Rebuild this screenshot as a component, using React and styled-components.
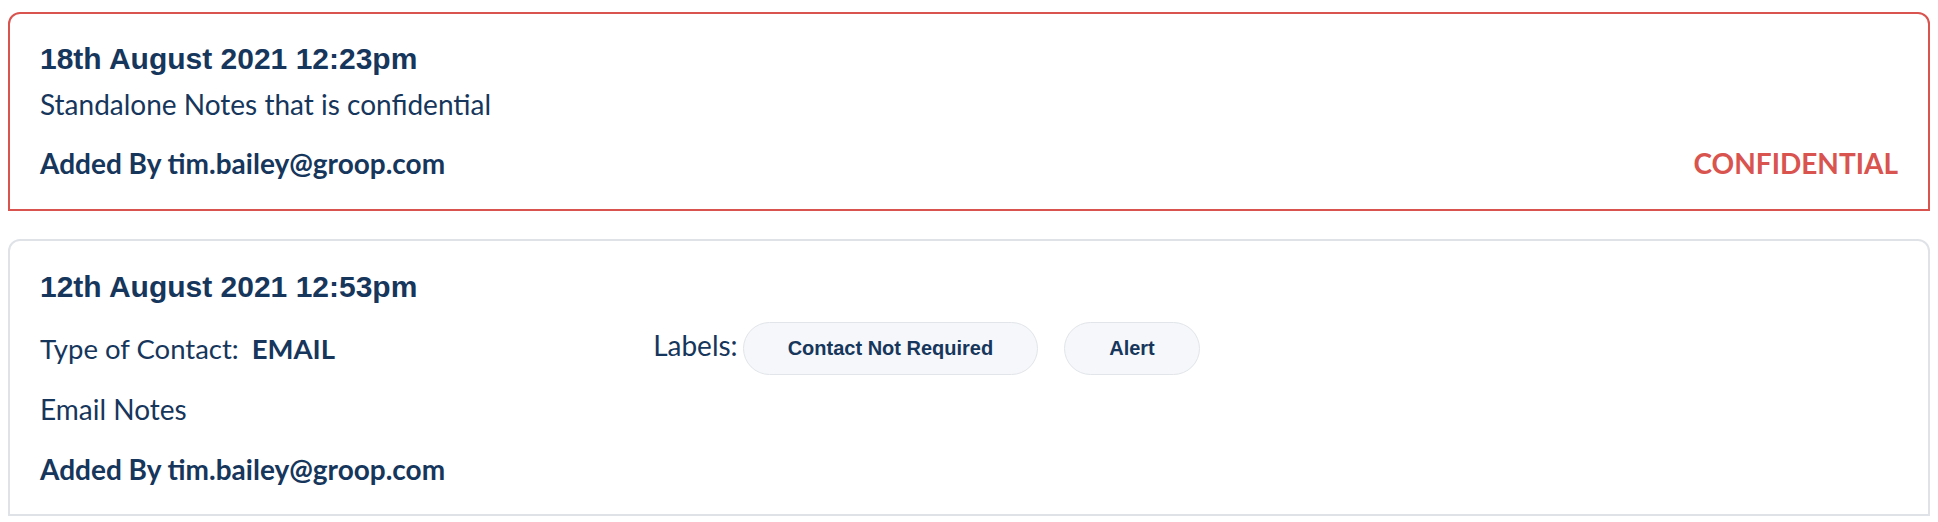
import React from "react";
import styled, { createGlobalStyle } from "styled-components";

const Global = createGlobalStyle`
  body {
    margin: 8px;
    background: #ffffff;
    font-family: "Lato", "Noto Sans", sans-serif;
    color: #16365c;
  }
`;

const List = styled.div`
  display: flex;
  flex-direction: column;
  gap: 28px;
  padding-top: 4px;
`;

const Card = styled.div`
  border: 2px solid ${(p) => (p.$confidential ? "#d9534f" : "#dfe3e8")};
  border-radius: 12px 12px 0 0;
  padding: ${(p) => (p.$confidential ? "28px 30px 29px" : "29px 30px 28px")};
  display: flex;
  flex-direction: column;
  background: #fff;
`;

const DateTitle = styled.div`
  font-family: "Liberation Sans", Arial, sans-serif;
  font-weight: 700;
  font-size: 30px;
  line-height: 34px;
  color: #16365c;
`;

const Text = styled.div`
  font-size: 28px;
  line-height: 1.2;
  margin-top: ${(p) => p.$mt || 0}px;
`;

const Footer = styled.div`
  display: flex;
  justify-content: space-between;
  align-items: baseline;
  margin-top: ${(p) => p.$mt || 0}px;
  font-size: 28px;
  line-height: 1.2;
  font-weight: 700;
`;

const Confidential = styled.span`
  color: #d9534f;
  font-weight: 700;
`;

const InfoRow = styled.div`
  display: grid;
  grid-template-columns: 33% 1fr;
  align-items: center;
  margin-top: 18px;
`;

const ContactType = styled.div`
  display: flex;
  align-items: center;
  gap: 13px;
  font-size: 27.5px;
  line-height: 1.2;
`;

const Strong = styled.span`
  font-weight: 700;
`;

const LabelGroup = styled.div`
  display: flex;
  align-items: center;
`;

const LabelsCaption = styled.span`
  font-size: 28px;
  line-height: 1.2;
  margin-right: 5px;
  position: relative;
  top: -3px;
`;

const Chips = styled.div`
  display: flex;
  gap: 26px;
`;

const Chip = styled.span`
  display: inline-flex;
  align-items: center;
  height: 53px;
  box-sizing: border-box;
  padding: 0 44px;
  border: 1px solid #e2e5e9;
  border-radius: 27px;
  background: #f5f7fa;
  font-family: "Liberation Sans", Arial, sans-serif;
  font-weight: 700;
  font-size: 20px;
  color: #16365c;
`;

export default function App() {
  return (
    <>
      <Global />
      <List>
        <Card $confidential>
          <DateTitle>18th August 2021 12:23pm</DateTitle>
          <Text $mt={12}>Standalone Notes that is confidential</Text>
          <Footer $mt={25}>
            <span>Added By tim.bailey@groop.com</span>
            <Confidential>CONFIDENTIAL</Confidential>
          </Footer>
        </Card>
        <Card>
          <DateTitle>12th August 2021 12:53pm</DateTitle>
          <InfoRow>
            <ContactType>
              <span>Type of Contact:</span>
              <Strong>EMAIL</Strong>
            </ContactType>
            <LabelGroup>
              <LabelsCaption>Labels:</LabelsCaption>
              <Chips>
                <Chip>Contact Not Required</Chip>
                <Chip>Alert</Chip>
              </Chips>
            </LabelGroup>
          </InfoRow>
          <Text $mt={18}>Email Notes</Text>
          <Footer $mt={26}>
            <span>Added By tim.bailey@groop.com</span>
          </Footer>
        </Card>
      </List>
    </>
  );
}
